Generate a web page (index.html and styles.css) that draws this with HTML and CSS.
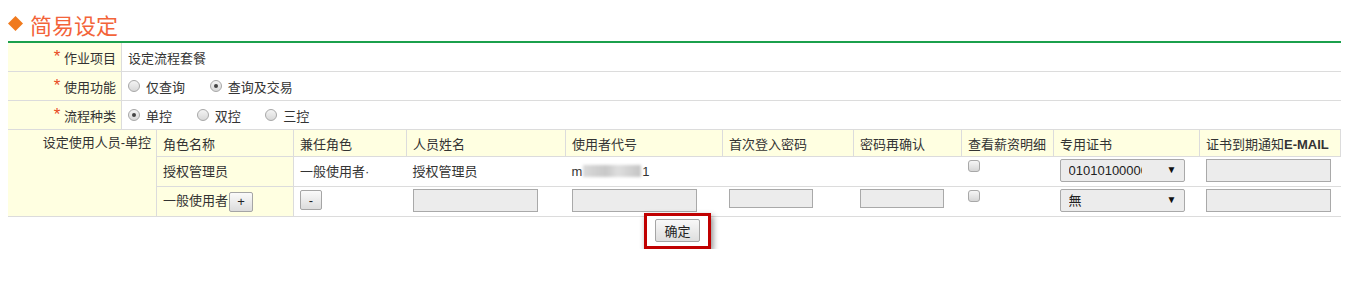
FILE: index.html
```html
<!DOCTYPE html>
<html>

<head>
    <title>简易设定</title>
    <link rel="stylesheet" href="styles.css">
</head>

<body>
    <div class="page-title">
        <svg class="diamond" width="15" height="15" viewBox="0 0 14 14"><polygon points="7,0 14,7 7,14 0,7" fill="#f07a1e"/></svg>
        <span>简易设定</span>
    </div>

    <table class="form-table">
        <tr>
            <td class="label"><span class="req">*</span> 作业项目</td>
            <td class="value">设定流程套餐</td>
        </tr>
        <tr>
            <td class="label"><span class="req">*</span> 使用功能</td>
            <td class="value">
                <label class="opt"><input type="radio" name="func" />仅查询</label>
                <label class="opt"><input type="radio" name="func" checked />查询及交易</label>
            </td>
        </tr>
        <tr>
            <td class="label"><span class="req">*</span> 流程种类</td>
            <td class="value">
                <label class="opt"><input type="radio" name="flow" checked />单控</label>
                <label class="opt"><input type="radio" name="flow" />双控</label>
                <label class="opt"><input type="radio" name="flow" />三控</label>
            </td>
        </tr>
    </table>

    <table class="user-table">
        <tr class="head">
            <td class="label" rowspan="3">设定使用人员-单控</td>
            <th class="c-role">角色名称</th>
            <th class="c-also">兼任角色</th>
            <th class="c-name">人员姓名</th>
            <th class="c-code">使用者代号</th>
            <th class="c-pwd">首次登入密码</th>
            <th class="c-pwd2">密码再确认</th>
            <th class="c-pay">查看薪资明细</th>
            <th class="c-cert">专用证书</th>
            <th class="c-mail">证书到期通知<b>E-MAIL</b></th>
        </tr>
        <tr>
            <td class="role">授权管理员</td>
            <td>一般使用者·</td>
            <td>授权管理员</td>
            <td>m<span class="masked"></span>1</td>
            <td></td>
            <td></td>
            <td class="top"><input type="checkbox" class="check" /></td>
            <td class="top">
                <span class="select-box">
                    <select><option>01010100000</option></select>
                </span>
            </td>
            <td class="top"><input type="text" class="field" /></td>
        </tr>
        <tr>
            <td class="role">一般使用者<button class="mini plus">+</button></td>
            <td class="top"><button class="mini minus">-</button></td>
            <td class="top"><input type="text" class="field" /></td>
            <td class="top"><input type="text" class="field" /></td>
            <td class="top"><input type="password" class="field short" /></td>
            <td class="top"><input type="password" class="field short" /></td>
            <td class="top"><input type="checkbox" class="check" /></td>
            <td class="top">
                <span class="select-box">
                    <select><option>無</option></select>
                </span>
            </td>
            <td class="top"><input type="text" class="field" /></td>
        </tr>
    </table>

    <div class="actions">
        <span class="highlight"><button class="submit">确定</button></span>
    </div>
</body>

</html>
```

FILE: styles.css
```css
body {
    margin: 8px;
    font-family: "Liberation Sans", "Noto Sans CJK SC", sans-serif;
    font-size: 13px;
    color: #333;
    background: #fff;
}

.page-title {
    height: 33px;
    display: flex;
    align-items: center;
    padding-bottom: 2px;
    box-sizing: border-box;
    font-size: 22px;
    color: #f3643a;
}

.page-title .diamond {
    margin: 0 7px 0 0;
}

table {
    border-collapse: collapse;
    width: 1333px;
}

td, th {
    padding: 0;
    font-weight: normal;
    text-align: left;
}

.form-table {
    border-top: 2px solid #1ba04c;
}

.form-table td {
    height: 28px;
    border-bottom: 1px solid #dcdcdc;
}

.form-table .label {
    width: 108px;
    padding-right: 5px;
    text-align: right;
    background: #ffffe1;
    border-right: 1px solid #dcdcdc;
}

.form-table .value {
    padding-left: 6px;
}

.req {
    color: #e8491d;
    font-size: 17px;
    line-height: 10px;
    vertical-align: 1px;
}

.opt {
    display: inline-flex;
    align-items: center;
    margin-right: 21px;
}

input[type="radio"] {
    appearance: none;
    width: 12px;
    height: 12px;
    margin: 0 6px 0 0;
    border: 1px solid #a8a8a8;
    border-radius: 50%;
    background: linear-gradient(#f4f4f4, #d8d8d8);
    box-sizing: border-box;
    position: relative;
}

input[type="radio"]:checked::after {
    content: "";
    position: absolute;
    left: 3px;
    top: 3px;
    width: 4px;
    height: 4px;
    border-radius: 50%;
    background: #444;
}

.user-table .label {
    width: 143px;
    padding: 5px 5px 0 0;
    text-align: right;
    vertical-align: top;
    background: #ffffe1;
    border-right: 1px solid #dcdcdc;
    border-bottom: 1px solid #dcdcdc;
}

.user-table th {
    height: 26px;
    padding-left: 6px;
    background: #ffffe1;
    border: 1px solid #dcdcdc;
    border-top: none;
}

.user-table th b {
    font-weight: bold;
}

.user-table td {
    height: 27px;
    padding-left: 6px;
    border-bottom: 1px solid #dcdcdc;
    line-height: 16px;
}

.user-table td.role {
    background: #ffffe1;
    border-left: 1px solid #dcdcdc;
    border-right: 1px solid #dcdcdc;
}

.user-table td.top {
    vertical-align: top;
    padding-top: 2px;
}

.c-role { width: 130px; }
.c-also { width: 106px; }
.c-name { width: 152px; }
.c-code { width: 150px; }
.c-pwd { width: 124px; }
.c-pwd2 { width: 101px; }
.c-pay { width: 85px; }
.c-cert { width: 139px; }

.masked {
    display: inline-block;
    width: 58px;
    height: 12px;
    margin: 0 1px;
    vertical-align: -1px;
    background: linear-gradient(90deg, #d9d9d9, #c8c8c8 40%, #dedede 60%, #c4c4c4);
    filter: blur(1.5px);
}

.field {
    display: block;
    width: 125px;
    height: 23px;
    margin: 0;
    padding: 0 4px;
    border: 1px solid #a9a9a9;
    background: #ececec;
    box-sizing: border-box;
}

.field.short {
    width: 84px;
    height: 19px;
}

.check {
    display: block;
    appearance: none;
    width: 12px;
    height: 12px;
    margin: 1px 0 0 0;
    border: 1px solid #a8a8a8;
    border-radius: 3px;
    background: linear-gradient(#f6f6f6, #d6d6d6);
    box-sizing: border-box;
}

.select-box {
    position: relative;
    display: block;
    width: 125px;
    height: 23px;
}

.select-box select {
    display: block;
    appearance: none;
    width: 125px;
    height: 23px;
    padding: 0 42px 0 8px;
    border: 1px solid #a9a9a9;
    border-radius: 2px;
    background: #ececec;
    font-family: "Liberation Sans", "Noto Sans CJK SC", sans-serif;
    font-size: 13px;
    color: #222;
    box-sizing: border-box;
}

.select-box::after {
    content: "▼";
    position: absolute;
    right: 8px;
    top: 5px;
    font-size: 10px;
    line-height: 12px;
    color: #111;
    pointer-events: none;
}

.mini {
    height: 20px;
    padding: 0;
    border: 1px solid #a5a5a5;
    border-radius: 2px;
    background: linear-gradient(#fafafa, #dcdcdc);
    font-family: "Liberation Sans", sans-serif;
    font-size: 13px;
    color: #222;
    vertical-align: middle;
}

.plus {
    width: 24px;
    margin-left: 1px;
}

.minus {
    display: block;
    width: 22px;
    margin-top: 1px;
}

.actions {
    text-align: center;
    margin-top: -4px;
}

.highlight {
    display: inline-block;
    padding: 3px 8px 4px 8px;
    margin-left: 1px;
    border: 3px solid #c00000;
    box-shadow: 2px 3px 6px rgba(0, 0, 0, 0.45);
    background: #fff;
    line-height: 0;
}

.submit {
    width: 45px;
    height: 23px;
    padding: 0;
    border: 1px solid #a5a5a5;
    border-radius: 2px;
    background: linear-gradient(#f8f8f8, #dedede);
    font-family: "Noto Sans CJK SC", sans-serif;
    font-size: 13px;
    color: #222;
}
```
